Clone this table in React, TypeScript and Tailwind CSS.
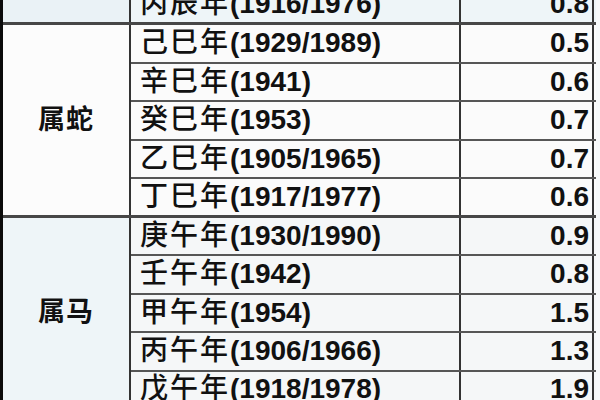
const groups = [
  {
    label: '',
    labelBg: 'bg-[#eaf2f6]',
    rowBg: 'bg-[#eef5f8]',
    rows: [{ name: '丙辰年', years: '(1916/1976)', value: '0.8' }],
  },
  {
    label: '属蛇',
    labelBg: 'bg-[#fcfcfc]',
    rowBg: 'bg-[#fbfbfb]',
    rows: [
      { name: '己巳年', years: '(1929/1989)', value: '0.5' },
      { name: '辛巳年', years: '(1941)', value: '0.6' },
      { name: '癸巳年', years: '(1953)', value: '0.7' },
      { name: '乙巳年', years: '(1905/1965)', value: '0.7' },
      { name: '丁巳年', years: '(1917/1977)', value: '0.6' },
    ],
  },
  {
    label: '属马',
    labelBg: 'bg-[#eef5f8]',
    rowBg: 'bg-[#f5f7f8]',
    rows: [
      { name: '庚午年', years: '(1930/1990)', value: '0.9' },
      { name: '壬午年', years: '(1942)', value: '0.8' },
      { name: '甲午年', years: '(1954)', value: '1.5' },
      { name: '丙午年', years: '(1906/1966)', value: '1.3' },
      { name: '戊午年', years: '(1918/1978)', value: '1.9' },
    ],
  },
];

const font = 'font-["Liberation_Sans","Noto_Sans_CJK_SC",sans-serif]';

export default function App() {
  return (
    <div className={`h-[400px] w-[600px] overflow-hidden border-l-[3px] border-[#0b0b0b] bg-[#f7f9fa] ${font} text-[#111]`}>
      <div className="-mt-[13.5px] w-[593px]">
        {groups.map((g, gi) => (
          <div key={gi} className="flex border-b-[3px] border-[#474747]">
            <div className={`flex w-[128px] items-center justify-center border-r-2 border-[#333] ${g.labelBg}`}>
              <span className="text-[27px] font-bold tracking-[1px]">{g.label}</span>
            </div>
            <div className="flex flex-1 flex-col">
              {g.rows.map((r, ri) => (
                <Row key={ri} {...r} bg={g.rowBg} last={ri === g.rows.length - 1} />
              ))}
            </div>
          </div>
        ))}
      </div>
    </div>
  );
}

function Row({ name, years, value, bg, last }: { name: string; years: string; value: string; bg: string; last: boolean }) {
  return (
    <div className={`flex ${last ? 'h-[35.5px]' : 'h-[38.5px] border-b-[2.5px] border-[#565656]'} ${bg}`}>
      <div className="flex w-[330px] items-center border-r-2 border-[#333] pl-[9px] leading-none">
        <span className="text-[28px] font-medium tracking-[2px]">{name}</span>
        <span className="text-[28px] font-bold">{years}</span>
      </div>
      <div className="flex w-[133px] items-center justify-end border-r-2 border-[#333] pr-[3px] leading-none">
        <span className="text-[28px] font-bold">{value}</span>
      </div>
    </div>
  );
}
